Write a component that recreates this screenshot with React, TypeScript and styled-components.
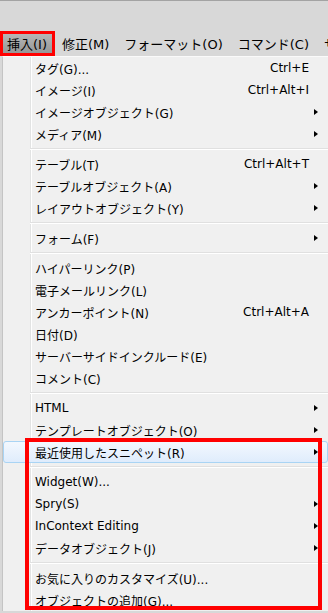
import React from 'react';
import styled, { createGlobalStyle, css } from 'styled-components';

type Entry =
  | { kind: 'item'; label: string; shortcut?: string; sub?: boolean; active?: boolean }
  | { kind: 'sep' };

const item = (label: string, shortcut?: string, sub?: boolean, active?: boolean): Entry => ({
  kind: 'item',
  label,
  shortcut,
  sub,
  active,
});
const sep: Entry = { kind: 'sep' };

const topEntries: Entry[] = [
  item('タグ(G)...', 'Ctrl+E'),
  item('イメージ(I)', 'Ctrl+Alt+I'),
  item('イメージオブジェクト(G)', undefined, true),
  item('メディア(M)', undefined, true),
  sep,
  item('テーブル(T)', 'Ctrl+Alt+T'),
  item('テーブルオブジェクト(A)', undefined, true),
  item('レイアウトオブジェクト(Y)', undefined, true),
  sep,
  item('フォーム(F)', undefined, true),
  sep,
  item('ハイパーリンク(P)'),
  item('電子メールリンク(L)'),
  item('アンカーポイント(N)', 'Ctrl+Alt+A'),
  item('日付(D)'),
  item('サーバーサイドインクルード(E)'),
  item('コメント(C)'),
  sep,
  item('HTML', undefined, true),
  item('テンプレートオブジェクト(O)', undefined, true),
];

// rows marked with the red box
const markedEntries: Entry[] = [
  item('最近使用したスニペット(R)', undefined, true, true),
  sep,
  item('Widget(W)...'),
  item('Spry(S)', undefined, true),
  item('InContext Editing', undefined, true),
  item('データオブジェクト(J)', undefined, true),
  sep,
  item('お気に入りのカスタマイズ(U)...'),
  item('オブジェクトの追加(G)...'),
];

const menus = ['挿入(I)', '修正(M)', 'フォーマット(O)', 'コマンド(C)', 'サイト(S)', 'ウィンドウ(W)'];

const GlobalStyle = createGlobalStyle`
  html, body {
    margin: 0;
    padding: 0;
  }
  body {
    background: #d8d8d8;
    font-family: "DejaVu Sans", "Noto Sans CJK JP", sans-serif;
  }
`;

const Window = styled.div`
  width: 328px;
  height: 613px;
  overflow: hidden;
  box-sizing: border-box;
  background: #d8d8d8;
  border-top: 1px solid #a3a3a3;
`;

const TitleArea = styled.div`
  height: 30px;
`;

const MenuBar = styled.nav`
  display: flex;
  height: 25px;
  white-space: nowrap;
`;

const MenuBarItem = styled.div<{ $open?: boolean }>`
  display: flex;
  align-items: center;
  flex-shrink: 0;
  box-sizing: border-box;
  padding: 0 5px 1px 4px;
  border: 3px solid transparent;
  font-size: 13px;
  color: #000;

  ${(p) =>
    p.$open &&
    css`
      border-color: #ff0000;
      background: linear-gradient(#b6b6b6, #979797);
    `}
`;

const Dropdown = styled.div`
  margin-left: 2px;
  border-left: 1px solid #c4c4c4;
  border-top: 1px solid #fafafa;
  background: #f0f0f0
    linear-gradient(
      to right,
      transparent 27px,
      #e2e3e3 27px,
      #e2e3e3 28px,
      #ffffff 28px,
      #ffffff 29px,
      transparent 29px
    );
`;

const Row = styled.div<{ $active?: boolean }>`
  display: grid;
  grid-template-columns: 1fr auto 18px;
  align-items: center;
  height: 22px;
  box-sizing: border-box;
  padding-left: 31px;
  border: 1px solid transparent;
  border-radius: 3px;
  font-size: 12px;
  color: #000;
  white-space: nowrap;

  ${(p) =>
    p.$active &&
    css`
      background: linear-gradient(#f3f8fe, #dfecfc);
      border-color: #a9d4f4;
    `}
`;

const Label = styled.span``;

const Shortcut = styled.span`
  text-align: right;
`;

const ArrowCell = styled.span`
  display: flex;
  align-items: center;
  padding-left: 5px;
`;

const Arrow = styled.span`
  width: 0;
  height: 0;
  border-left: 4px solid #000;
  border-top: 3.5px solid transparent;
  border-bottom: 3.5px solid transparent;
`;

const Separator = styled.div`
  display: flex;
  align-items: center;
  height: 8px;
  padding-left: 27px;

  &::before {
    content: '';
    flex: 1;
    height: 1px;
    background: #e0e0e0;
    border-bottom: 1px solid #ffffff;
  }
`;

const Marked = styled.div`
  position: relative;

  &::after {
    content: '';
    position: absolute;
    left: 22px;
    right: 6px;
    top: -3px;
    bottom: 1px;
    border: 4px solid #ff0000;
    pointer-events: none;
  }
`;

function renderEntries(entries: Entry[]) {
  return entries.map((e, i) =>
    e.kind === 'sep' ? (
      <Separator key={i} />
    ) : (
      <Row key={i} $active={e.active}>
        <Label>{e.label}</Label>
        <Shortcut>{e.shortcut}</Shortcut>
        <ArrowCell>{e.sub && <Arrow />}</ArrowCell>
      </Row>
    )
  );
}

export default function App() {
  return (
    <>
      <GlobalStyle />
      <Window>
        <TitleArea />
        <MenuBar>
          {menus.map((m, i) => (
            <MenuBarItem key={m} $open={i === 0}>
              {m}
            </MenuBarItem>
          ))}
        </MenuBar>
        <Dropdown>
          {renderEntries(topEntries)}
          <Marked>{renderEntries(markedEntries)}</Marked>
        </Dropdown>
      </Window>
    </>
  );
}
